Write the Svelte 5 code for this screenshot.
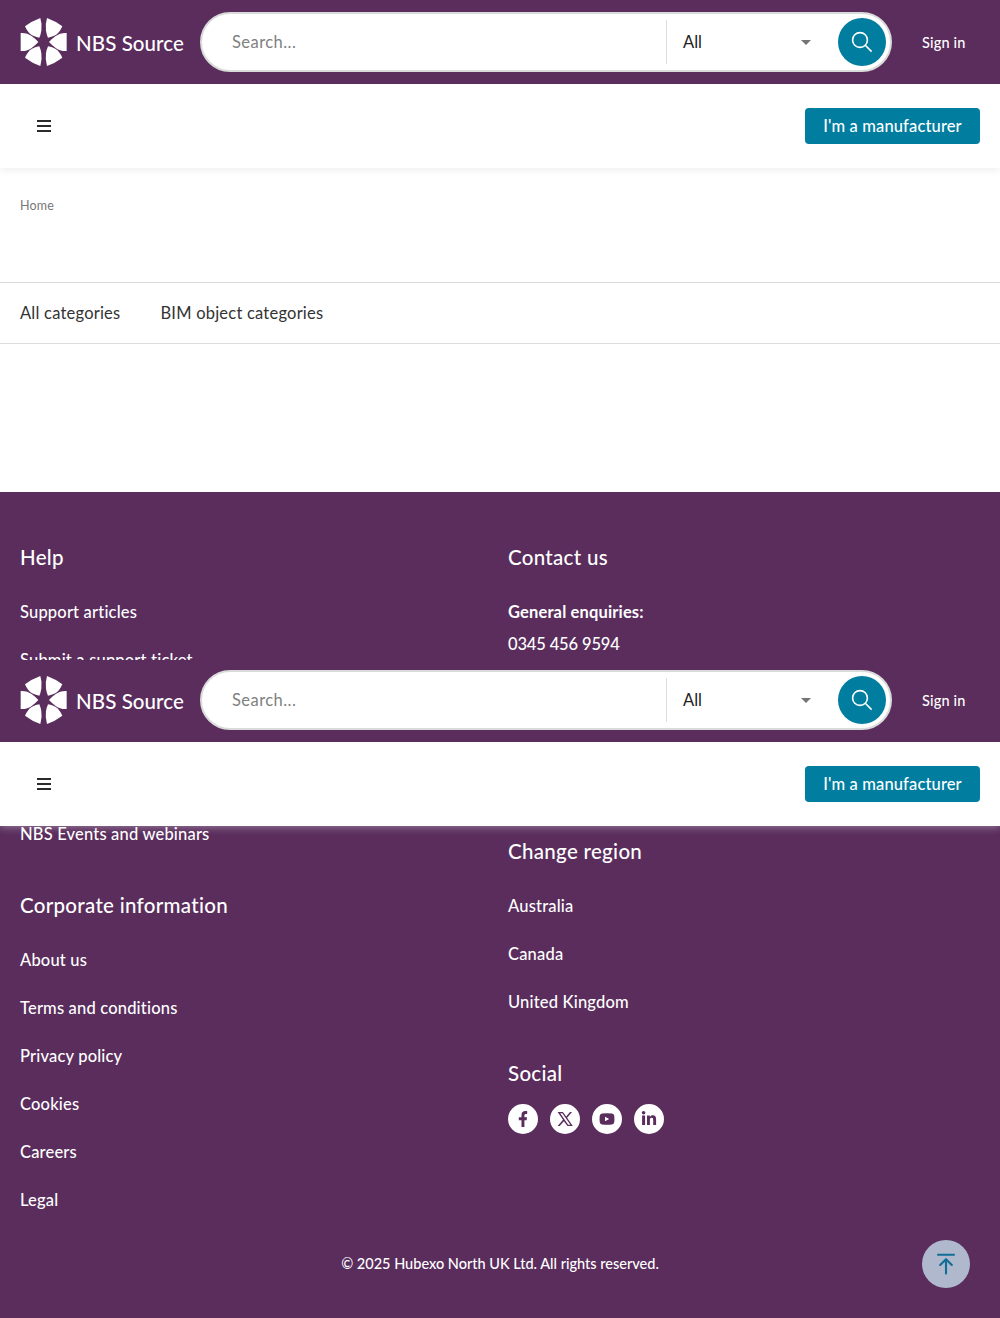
<script>
  const corporate = ['About us', 'Terms and conditions', 'Privacy policy', 'Cookies', 'Careers', 'Legal'];
  const regions = ['Australia', 'Canada', 'United Kingdom'];
  const petals = [
    'M14 57Q34 56 48 67Q60 76 67 84Q60 92 48 101Q34 112 14 111Z',
    'M27 37Q48 21 73 12Q79 32 76 50Q74 62 70 71Q60 70 48 64Q35 56 27 37Z',
    'M27 131Q48 147 73 156Q79 136 76 118Q74 106 70 97Q60 98 48 104Q35 112 27 131Z'
  ];
</script>

{#snippet masthead()}
  <div class="bar">
    <svg class="logo" viewBox="12 12 144 144">
      <g>{#each petals as d}<path {d} />{/each}</g>
      <g transform="translate(166 0) scale(-1 1)">{#each petals as d}<path {d} />{/each}</g>
    </svg>
    <span class="brand">NBS Source</span>
    <div class="search">
      <span class="placeholder">Search...</span>
      <div class="scope">
        <span>All</span>
        <i class="caret"></i>
      </div>
      <button class="go" aria-label="Search">
        <svg width="24" height="24" viewBox="0 0 24 24" fill="none" stroke="#fff" stroke-width="1.6">
          <circle cx="10" cy="10" r="7.4" /><path d="M15.3 15.3L21.6 21.6" />
        </svg>
      </button>
    </div>
    <a class="signin">Sign in</a>
  </div>
  <div class="nav">
    <button class="burger" aria-label="Menu"><i></i><i></i><i></i></button>
    <button class="maker">I'm a manufacturer</button>
  </div>
{/snippet}

<div class="page">
  <header class="head">{@render masthead()}</header>
  <header class="head floating">{@render masthead()}</header>

  <div class="crumbs">Home</div>
  <nav class="tabs"><a>All categories</a><a>BIM object categories</a></nav>

  <footer>
    <div class="cols">
      <div class="col">
        <section>
          <h2>Help</h2>
          <a class="link">Support articles</a>
          <a class="link">Submit a support ticket</a>
        </section>
        <section class="events">
          <a class="link">NBS Events and webinars</a>
        </section>
        <section>
          <h2>Corporate information</h2>
          {#each corporate as item}<a class="link">{item}</a>{/each}
        </section>
      </div>
      <div class="col">
        <section class="contact">
          <h2>Contact us</h2>
          <strong>General enquiries:</strong>
          <span class="phone">0345 456 9594</span>
        </section>
        <section>
          <h2>Change region</h2>
          {#each regions as item}<a class="link">{item}</a>{/each}
        </section>
        <section>
          <h2>Social</h2>
          <div class="social">
            <a aria-label="Facebook"><svg viewBox="0 0 30 30"><path d="M13.5 23V16.2H10.8V13.2H13.5V11.3C13.5 8.5 14.9 7.1 17.4 7.1C18.3 7.1 18.9 7.2 19.2 7.3V9.9H17.9C16.8 9.9 16.4 10.4 16.4 11.5V13.2H19.1L18.6 16.2H16.4V23Z" /></svg></a>
            <a aria-label="X"><svg viewBox="0 0 30 30"><path fill-rule="evenodd" d="M7.6 8H12.9L16.2 12.4L20 8H22L17.1 13.7L22.8 22H17.5L13.9 17.2L9.7 22H7.6L13 15.8ZM10.2 9.2L18.2 20.8H20.4L12.3 9.2Z" /></svg></a>
            <a aria-label="YouTube"><svg viewBox="0 0 30 30"><path fill-rule="evenodd" d="M10 9.5Q15 9 20 9.5Q22 9.7 22.3 12Q22.6 15 22.3 18Q22 20.3 20 20.5Q15 21 10 20.5Q8 20.3 7.7 18Q7.4 15 7.7 12Q8 9.7 10 9.5ZM13 12.8V17.2L17.2 15Z" /></svg></a>
            <a aria-label="LinkedIn"><svg viewBox="0 0 30 30"><circle cx="9.6" cy="8.7" r="1.8" /><path d="M8.1 11.6H11.1V21H8.1ZM13 11.6H15.8V12.9C16.4 11.9 17.4 11.3 18.8 11.3C21.2 11.3 22.1 12.8 22.1 15.4V21H19.2V15.9C19.2 14.6 18.9 13.8 17.7 13.8C16.4 13.8 15.9 14.7 15.9 16V21H13Z" /></svg></a>
          </div>
        </section>
      </div>
    </div>
    <p class="legal">© 2025 Hubexo North UK Ltd. All rights reserved.</p>
    <button class="top" aria-label="Back to top">
      <svg width="24" height="28" viewBox="0 0 24 28" fill="none" stroke="#126e96" stroke-width="2.1" stroke-linecap="round">
        <path d="M4 4.7H20M12 23.6V9.4M6.2 15L12 9.2L17.8 15" />
      </svg>
    </button>
  </footer>
</div>

<style>
  :global(body) { margin: 0; background: #fff; }
  .page {
    position: relative;
    width: 1000px;
    height: 1318px;
    overflow: hidden;
    display: flex;
    flex-direction: column;
    font-family: Lato, sans-serif;
    font-size: 16.5px;
    font-variant-ligatures: none;
    color: #222;
  }
  .page * { box-sizing: border-box; }
  button { border: 0; padding: 0; font: inherit; display: flex; align-items: center; justify-content: center; }
  .head { background: #fff; height: 168px; flex: none; box-shadow: 0 2px 8px rgba(0, 0, 0, 0.07); }
  .floating {
    position: absolute;
    top: 660px;
    left: 0;
    width: 100%;
    height: 166px;
    z-index: 2;
    box-shadow: 0 1px 8px rgba(255, 255, 255, 0.4);
    clip-path: inset(0 0 -12px 0);
  }
  .bar { display: flex; align-items: center; height: 84px; padding-left: 20px; background: #5a2d5d; color: #fff; }
  .floating .bar { height: 82px; padding-bottom: 2px; }
  .logo { width: 48px; height: 48px; fill: #fff; flex: none; }
  .brand { width: 124px; padding: 2px 0 0 8px; font-size: 20.5px; font-weight: 500; line-height: 24px; letter-spacing: 0.08px; white-space: nowrap; }
  .search {
    display: flex;
    align-items: center;
    margin-left: 8px;
    flex: none;
    width: 692px;
    height: 60px;
    padding-right: 4px;
    border: 2px solid #d9dbda;
    border-radius: 30px;
    background: #fff;
    color: #222;
  }
  .placeholder { flex: 1; padding-left: 30px; color: #808080; letter-spacing: 0.45px; }
  .scope { display: flex; align-items: center; justify-content: space-between; width: 172px; height: 44px; padding: 0 27px 0 16px; border-left: 1px solid #ddd; }
  .caret { border: 5px solid transparent; border-top-color: #757575; border-bottom: 0; }
  .go { width: 48px; height: 48px; border-radius: 50%; background: #007d9f; }
  .signin { margin-left: 30px; font-size: 14.5px; font-weight: 500; letter-spacing: 0.15px; white-space: nowrap; }
  .nav { display: flex; align-items: center; justify-content: space-between; height: 84px; padding: 0 20px 0 37px; }
  .burger { display: flex; flex-direction: column; gap: 3px; background: none; }
  .burger i { width: 14px; height: 2px; background: #2b2b2b; }
  .maker { width: 175px; height: 36px; border-radius: 4px; background: #007d9f; color: #fff; font-weight: 500; letter-spacing: 0.13px; }
  .crumbs { height: 114px; padding: 28px 20px 0; font-size: 12.5px; line-height: 20px; color: #777; letter-spacing: 0.2px; }
  .tabs { display: flex; gap: 40px; align-items: center; height: 62px; padding: 0 20px; border: solid #dcdcdc; border-width: 1px 0; color: #333; letter-spacing: 0.22px; }
  footer { position: relative; margin-top: 148px; height: 826px; padding: 50px 20px 0; background: #5a2d5d; color: #fff; font-weight: 500; }
  .cols { display: grid; grid-template-columns: 488px 1fr; }
  .col { display: flex; flex-direction: column; gap: 32px; }
  section { display: flex; flex-direction: column; }
  h2 { margin: 0 0 16px; font-size: 20.5px; font-weight: 500; line-height: 30px; letter-spacing: 0.3px; }
  .link { height: 48px; line-height: 49px; letter-spacing: 0.18px; }
  .events { padding-top: 94px; }
  .contact { height: 262px; }
  .contact h2 { margin-bottom: 24px; }
  strong, .phone { height: 32px; line-height: 33px; }
  strong { letter-spacing: 0.15px; }
  .phone { letter-spacing: -0.15px; }
  .social { display: flex; gap: 12px; }
  .social a { width: 30px; height: 30px; border-radius: 50%; background: #fff; }
  .social svg { display: block; fill: #5a2d5d; }
  .legal { margin: 27px 0 0; font-size: 14.5px; line-height: 25px; text-align: center; }
  .top { position: absolute; right: 30px; bottom: 30px; width: 48px; height: 48px; border-radius: 50%; background: #afb8cc; }
</style>
